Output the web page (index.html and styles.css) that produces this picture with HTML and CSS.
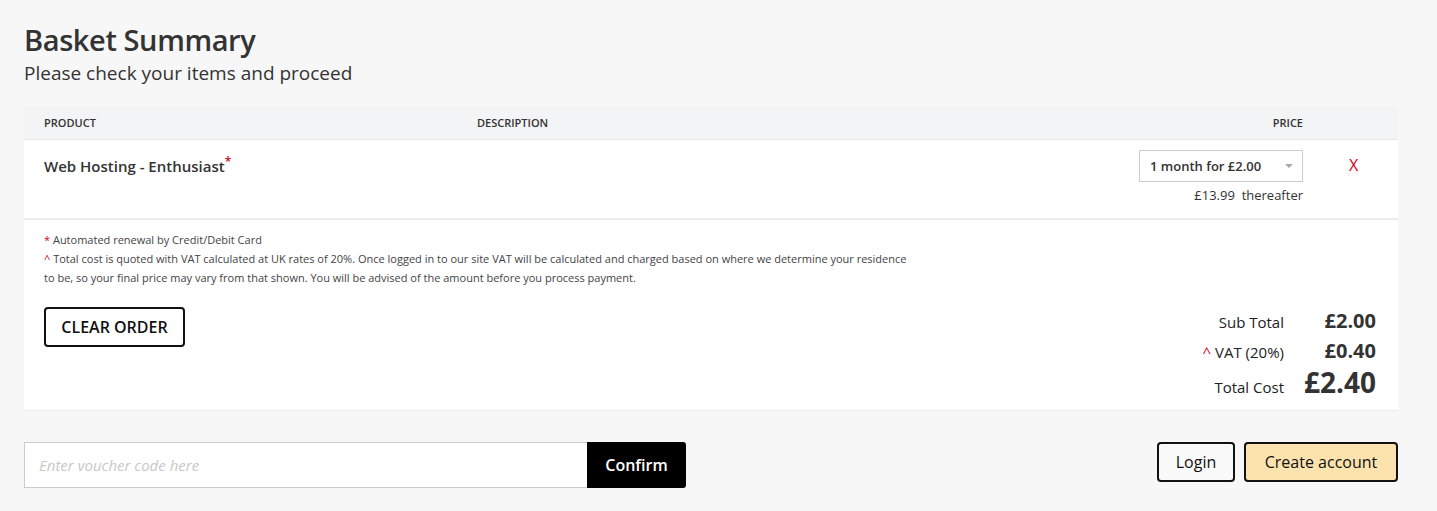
FILE: index.html
```html
<!DOCTYPE html>
<html lang="en">
<head>
<meta charset="utf-8">
<title>Basket Summary</title>
<link rel="stylesheet" href="styles.css">
</head>
<body>
<main class="page">
  <header class="head">
    <h1 class="title">Basket Summary</h1>
    <p class="subtitle">Please check your items and proceed</p>
  </header>

  <section class="basket">
    <div class="thead">
      <div class="col-product">PRODUCT</div>
      <div class="col-desc">DESCRIPTION</div>
      <div class="col-price">PRICE</div>
      <div class="col-remove"></div>
    </div>
    <div class="row">
      <div class="col-product product-name">Web Hosting - Enthusiast<sup class="req">*</sup></div>
      <div class="col-desc"></div>
      <div class="col-price">
        <div class="select">
          <span>1 month for £2.00</span>
          <span class="caret"></span>
        </div>
        <div class="after">£13.99&nbsp; thereafter</div>
      </div>
      <div class="col-remove"><span class="remove">X</span></div>
    </div>
    <div class="foot">
      <div class="notes">
        <p><span class="req">*</span> Automated renewal by Credit/Debit Card</p>
        <p><span class="req">^</span> Total cost is quoted with VAT calculated at UK rates of 20%. Once logged in to our site VAT will be calculated and charged based on where we determine your residence to be, so your final price may vary from that shown. You will be advised of the amount before you process payment.</p>
        <button class="clear">CLEAR ORDER</button>
      </div>
      <div class="totals">
        <div class="trow"><span class="tlabel">Sub Total</span><span class="tval">£2.00</span></div>
        <div class="trow"><span class="tlabel"><span class="req">^</span> VAT (20%)</span><span class="tval">£0.40</span></div>
        <div class="trow total"><span class="tlabel">Total Cost</span><span class="tval big">£2.40</span></div>
      </div>
    </div>
  </section>

  <section class="actions">
    <div class="voucher">
      <input class="vinput" type="text" placeholder="Enter voucher code here">
      <button class="confirm">Confirm</button>
    </div>
    <div class="account">
      <button class="btn login">Login</button>
      <button class="btn create">Create account</button>
    </div>
  </section>
</main>
</body>
</html>
```

FILE: styles.css
```css
* { box-sizing: border-box; }
html, body { margin: 0; padding: 0; }
body {
  background: #f7f7f7;
  font-family: "Open Sans", "Noto Sans", sans-serif;
  color: #333;
}
.page {
  padding: 20px 39px 0 24px;
}
.head { margin-bottom: 20px; }
.title {
  margin: 0;
  font-size: 29px;
  font-weight: 600;
  line-height: 40px;
  letter-spacing: -0.4px;
  color: #333;
}
.subtitle {
  margin: 0;
  font-size: 19px;
  line-height: 26px;
  color: #333;
}
.basket { background: #fff; border-bottom: 1px solid #ececec; }
.thead, .row {
  display: flex;
  padding: 0 20px;
}
.thead {
  background: #f3f4f6;
  height: 34px;
  align-items: center;
  font-size: 11px;
  font-weight: 600;
  color: #333;
  border-bottom: 1px solid #e8e8e8;
}
.col-product { width: 433px; }
.col-desc { flex: 1; }
.col-price { width: 220px; text-align: right; display: flex; flex-direction: column; align-items: flex-end; }
.col-remove { width: 75px; text-align: center; padding-left: 26px; }
.row {
  height: 80px;
  padding-top: 10px;
  border-bottom: 2px solid #ececec;
}
.product-name {
  font-size: 15px;
  font-weight: 600;
  padding-top: 6px;
  color: #333;
}
.req { color: #d0021b; }
sup.req { font-size: 12px; vertical-align: 6px; line-height: 0; }
.select {
  width: 164px;
  height: 32px;
  border: 1px solid #ccc;
  display: flex;
  align-items: center;
  justify-content: space-between;
  padding: 0 9px 0 10px;
  font-size: 13px;
  font-weight: 600;
  color: #333;
  text-align: left;
}
.caret {
  width: 0; height: 0;
  border-left: 4px solid transparent;
  border-right: 4px solid transparent;
  border-top: 4px solid #aaa;
}
.after {
  margin-top: 4px;
  font-size: 13px;
  line-height: 18px;
  color: #333;
}
.remove {
  display: inline-block;
  color: #d0021b;
  font-size: 16px;
  line-height: 30px;
}
.foot {
  display: flex;
  justify-content: space-between;
  padding: 10px 22px 11px 20px;
}
.notes {
  width: 866px;
  font-size: 11px;
  line-height: 19px;
  color: #444;
}
.notes p { margin: 0; }
.clear {
  margin-top: 20px;
  width: 141px;
  height: 40px;
  background: #fff;
  border: 2px solid #111;
  border-radius: 4px;
  font-family: inherit;
  font-size: 16px;
  font-weight: 600;
  color: #111;
  cursor: pointer;
}
.totals {
  padding-top: 77px;
  display: flex;
  flex-direction: column;
}
.trow {
  display: flex;
  justify-content: flex-end;
  align-items: baseline;
  height: 30px;
}
.tlabel {
  font-size: 15px;
  color: #222;
  text-align: right;
}
.tval {
  width: 92px;
  text-align: right;
  font-size: 20px;
  font-weight: 700;
  color: #333;
}
.tval.big { font-size: 28px; line-height: 30px; }
.trow.total { height: 32px; }
.actions {
  display: flex;
  justify-content: space-between;
  align-items: flex-start;
  margin-top: 31px;
}
.voucher { display: flex; }
.vinput {
  width: 563px;
  height: 46px;
  border: 1px solid #ccc;
  border-right: 0;
  background: #fff;
  padding: 0 14px;
  font-family: inherit;
  font-size: 15px;
  font-style: italic;
  outline: none;
}
.vinput::placeholder { color: #c8c8c8; }
.confirm {
  width: 99px;
  height: 46px;
  background: #000;
  color: #fff;
  border: 0;
  border-radius: 0 3px 3px 0;
  font-family: inherit;
  font-size: 16px;
  font-weight: 600;
}
.account { display: flex; gap: 9px; }
.btn {
  height: 40px;
  border: 2px solid #111;
  border-radius: 4px;
  font-family: inherit;
  font-size: 16px;
  font-weight: 500;
  color: #111;
  padding: 0;
}
.login { background: #f9f9f9; width: 78px; }
.create { background: #fce3ad; width: 154px; }
```
